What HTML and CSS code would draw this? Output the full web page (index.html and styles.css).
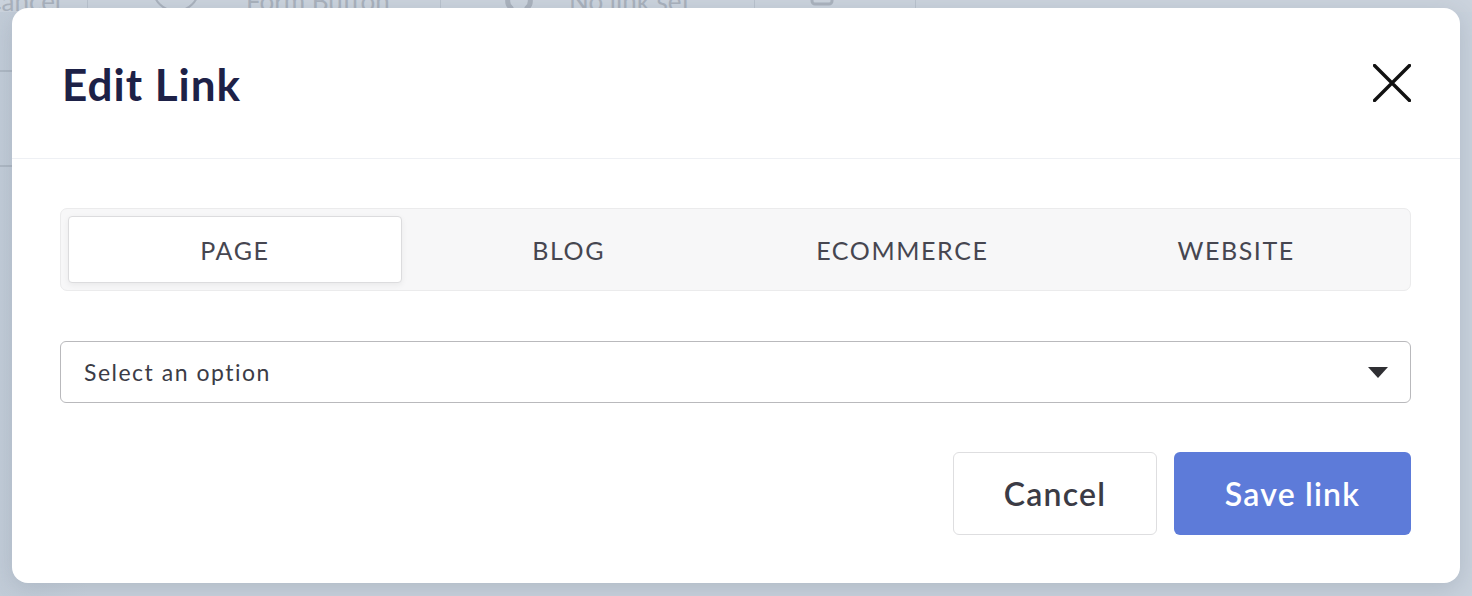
FILE: index.html
```html
<!DOCTYPE html>
<html>
<head>
<meta charset="utf-8">
<link rel="stylesheet" href="styles.css">
</head>
<body>
<div class="page">
  <div class="toolbar">
    <div class="tb-cell tb-first">Cancel</div>
    <div class="tb-cell tb-form">
      <span class="tb-circle"></span>
      <span>Form Button</span>
    </div>
    <div class="tb-cell tb-link">
      <svg class="tb-linkicon" width="44" height="22" viewBox="0 0 44 22"><path d="M14 4 a9 9 0 0 0 0 14 M30 4 a9 9 0 0 1 0 14" fill="none" stroke="#aab2bd" stroke-width="5" stroke-linecap="round"/></svg>
      <span>No link set</span>
    </div>
    <div class="tb-cell tb-copy">
      <svg width="34" height="22" viewBox="0 0 34 22"><rect x="7" y="-6" width="20" height="20" rx="3" fill="none" stroke="#aab2bd" stroke-width="3"/></svg>
    </div>
  </div>
  <div class="side-lines">
    <div class="side-line"></div>
    <div class="side-line side-line2"></div>
  </div>
</div>

<div class="modal">
  <div class="modal-header">
    <h1 class="modal-title">Edit Link</h1>
    <button class="close-btn" aria-label="Close">
      <svg width="38" height="38" viewBox="0 0 38 38"><path d="M1.5 1.5 L36.5 36.5 M36.5 1.5 L1.5 36.5" stroke="#111" stroke-width="3.4" stroke-linecap="round"/></svg>
    </button>
  </div>
  <div class="modal-body">
    <div class="tabs">
      <div class="tab tab-active">PAGE</div>
      <div class="tab">BLOG</div>
      <div class="tab">ECOMMERCE</div>
      <div class="tab">WEBSITE</div>
    </div>
    <div class="select">
      <span class="select-text">Select an option</span>
      <svg class="select-arrow" width="20" height="11" viewBox="0 0 20 11"><path d="M0 0 H20 L10 11 Z" fill="#2f2f33"/></svg>
    </div>
    <div class="actions">
      <button class="btn btn-cancel">Cancel</button>
      <button class="btn btn-save">Save link</button>
    </div>
  </div>
</div>
</body>
</html>
```

FILE: styles.css
```css
* { box-sizing: border-box; }
html, body {
  margin: 0;
  padding: 0;
  width: 1472px;
  height: 596px;
  overflow: hidden;
}
body {
  background: linear-gradient(90deg, #c2ccd8 0%, #c9d2dd 6%, #c9d2dd 100%);
  font-family: "Lato", "Liberation Sans", sans-serif;
}
.page {
  width: 100%;
  height: 100%;
}
.toolbar {
  display: flex;
  height: 22px;
  margin-top: -10px;
  background: #cbd3dd;
  color: #a9b1bc;
  font-size: 26px;
  line-height: 26px;
}
.tb-cell {
  display: flex;
  align-items: center;
  gap: 40px;
  border-right: 1px solid #b9c2cd;
  overflow: hidden;
}
.tb-first { width: 88px; justify-content: flex-end; padding-right: 26px; }
.tb-form { width: 353px; padding-left: 64px; gap: 46px; }
.tb-circle {
  width: 48px;
  height: 48px;
  border: 2px solid #aab2bd;
  border-radius: 50%;
  margin-top: -26px;
  flex: none;
}
.tb-link { width: 314px; padding-left: 56px; gap: 28px; }
.tb-copy { width: 161px; padding-left: 50px; }
.side-lines {
  padding-top: 58px;
}
.side-line {
  width: 12px;
  height: 2px;
  background: #aeb8c4;
}
.side-line2 { margin-top: 93px; }

.modal {
  position: absolute;
  left: 12px;
  top: 8px;
  width: 1448px;
  height: 575px;
  background: #fff;
  border-radius: 16px;
  box-shadow: 0 6px 24px rgba(60, 75, 95, 0.18);
  display: flex;
  flex-direction: column;
}
.modal-header {
  height: 151px;
  display: flex;
  align-items: center;
  justify-content: space-between;
  padding: 0 49px 0 50px;
  border-bottom: 1px solid #eef0f4;
}
.modal-title {
  margin: 0;
  font-size: 44px;
  font-weight: 700;
  color: #1d2147;
  letter-spacing: 1px;
  padding-top: 2px;
}
.close-btn {
  border: 0;
  background: none;
  padding: 0;
  width: 38px;
  height: 38px;
  margin-top: -1px;
}
.close-btn svg { display: block; }
.modal-body {
  padding: 49px 49px 0 48px;
}
.tabs {
  display: grid;
  grid-template-columns: repeat(4, 1fr);
  height: 83px;
  padding: 7px;
  background: #f7f7f8;
  border: 1px solid #ebebec;
  border-radius: 7px;
}
.tab {
  display: flex;
  align-items: center;
  justify-content: center;
  font-size: 25px;
  color: #464650;
  letter-spacing: 1.6px;
}
.tab-active {
  background: #fff;
  border: 1px solid #dcdcde;
  border-radius: 4px;
  box-shadow: 0 2px 6px rgba(0, 0, 0, 0.06);
}
.select {
  margin-top: 50px;
  height: 62px;
  border: 1.5px solid #b9b9bc;
  border-radius: 6px;
  display: flex;
  align-items: center;
  justify-content: space-between;
  padding: 0 22px 0 23px;
}
.select-text {
  font-size: 23px;
  color: #3c3c46;
  letter-spacing: 1.5px;
}
.select-arrow { display: block; margin-top: 1px; }
.actions {
  margin-top: 49px;
  display: flex;
  justify-content: flex-end;
  gap: 17px;
}
.btn {
  height: 83px;
  border-radius: 6px;
  font-family: "Lato", "Liberation Sans", sans-serif;
  font-size: 32px;
  font-weight: 600;
  letter-spacing: 1.2px;
  cursor: pointer;
}
.btn-cancel {
  width: 204px;
  background: #fff;
  border: 1.5px solid #dedee0;
  color: #3b3b45;
}
.btn-save {
  width: 237px;
  background: #5d7bd9;
  border: 0;
  color: #fff;
}
```
